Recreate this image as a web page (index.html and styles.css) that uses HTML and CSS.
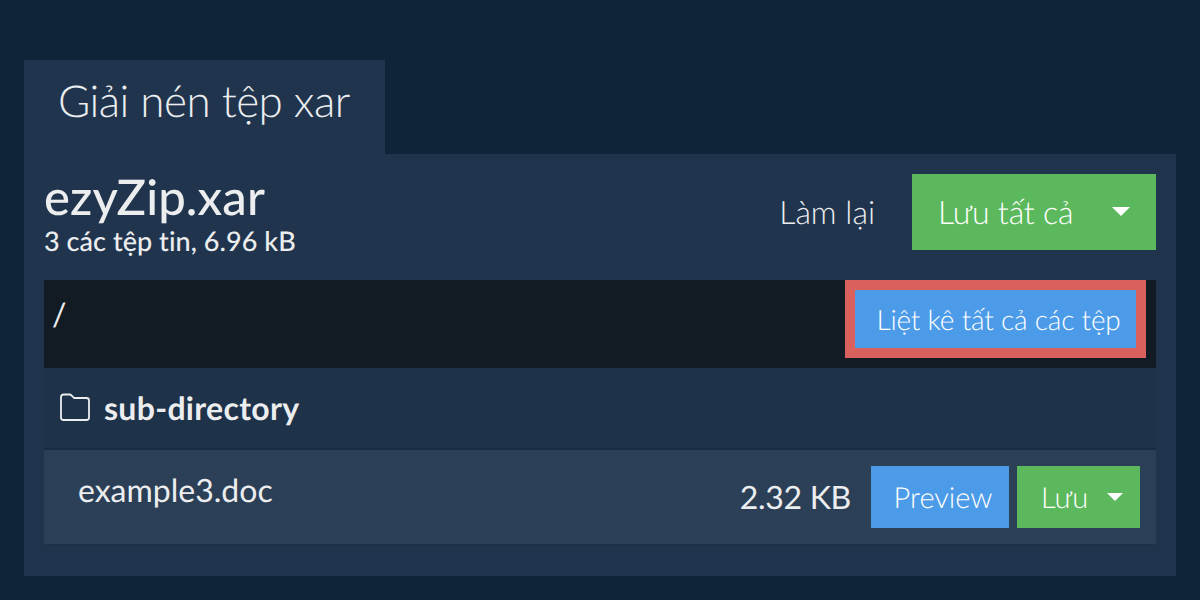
FILE: index.html
```html
<!DOCTYPE html>
<html lang="vi">
<head>
<meta charset="utf-8">
<title>Giải nén tệp xar</title>
<link rel="stylesheet" href="styles.css">
</head>
<body>
<main class="page">
  <h1 class="tab">Giải nén tệp xar</h1>
  <section class="panel">
    <header class="head">
      <div class="info">
        <div class="name">ezyZip.xar</div>
        <div class="meta">3 các tệp tin, 6.96 kB</div>
      </div>
      <div class="actions">
        <span class="redo">Làm lại</span>
        <button class="btn green save-all"><span>Lưu tất cả</span><i class="caret"></i></button>
      </div>
    </header>
    <div class="path">
      <span class="slash">/</span>
      <div class="hl"><button class="btn blue list">Liệt kê tất cả các tệp</button></div>
    </div>
    <div class="folder">
      <svg class="ficon" viewBox="0 0 32 28" width="32" height="28" fill="none" stroke="#ecedef" stroke-width="1.8" stroke-linejoin="round"><path d="M2 24.500V4a2.500 2.500 0 0 1 2.500-2.500h6a3 3 0 0 1 2 .8L15 5h12.500A2.500 2.500 0 0 1 30 7.500v17a2.500 2.500 0 0 1-2.500 2.500h-23A2.500 2.500 0 0 1 2 24.500z"/></svg>
      <span class="fname">sub-directory</span>
    </div>
    <div class="file">
      <span class="doc">example3.doc</span>
      <div class="row-actions">
        <span class="size">2.32 KB</span>
        <button class="btn blue preview">Preview</button>
        <button class="btn green save"><span>Lưu</span><i class="caret small"></i></button>
      </div>
    </div>
  </section>
</main>
</body>
</html>
```
FILE: styles.css
```css
* { box-sizing: border-box; }
html, body { margin: 0; height: 100%; }
body {
  background: #0f2439;
  color: #ecedef;
  font-family: Lato, "Liberation Sans", sans-serif;
  text-rendering: geometricPrecision;
  overflow: hidden;
}
.page { padding: 60px 24px 0; }
.tab {
  margin: 0;
  width: 361px;
  height: 94px;
  padding: 13px 0 0 34px;
  background: #20354d;
  font-size: 44px;
  line-height: 56px;
  font-weight: 300;
  letter-spacing: -0.5px;
}
.panel {
  height: 422px;
  padding: 20px;
  background: #20354d;
}
.head {
  display: flex;
  justify-content: space-between;
  height: 106px;
}
.name { font-size: 49px; line-height: 58px; font-weight: 500; margin-top: -6px; letter-spacing: 0.1px; }
.meta { font-size: 27px; line-height: 30px; font-weight: 500; letter-spacing: 0.05px; }
.actions { display: flex; align-items: flex-start; }
.redo { font-size: 32px; font-weight: 300; line-height: 76px; margin-right: 37px; }
.btn {
  display: flex;
  align-items: center;
  border: 0;
  padding: 0;
  color: #fff;
  font-family: inherit;
  font-weight: 300;
  text-rendering: geometricPrecision;
}
.green { background: #5cb85c; }
.blue { background: #4c9be8; }
.save-all {
  width: 244px;
  height: 76px;
  padding: 0 26px 2px 26px;
  justify-content: space-between;
  font-size: 32px;
  letter-spacing: -0.2px;
}
.caret {
  width: 0;
  height: 0;
  border-left: 9px solid transparent;
  border-right: 9px solid transparent;
  border-top: 9px solid #fff;
}
.caret.small { border-left-width: 8px; border-right-width: 8px; border-top-width: 8px; }
.path {
  display: flex;
  justify-content: space-between;
  height: 88px;
  padding-right: 10px;
  background: #121a24;
}
.slash { font-size: 32px; line-height: 68px; margin-left: 8px; }
.hl { height: 78px; border: 10px solid #d9605c; }
.list { width: 281px; height: 58px; justify-content: center; padding-left: 6px; font-size: 28px; letter-spacing: -0.2px; }
.folder {
  display: flex;
  align-items: center;
  height: 82px;
  padding: 0 0 0 15px;
  background: #1e3249;
  border-bottom: 2px solid #1a2c41;
}
.ficon { margin-right: 13px; margin-top: -3px; }
.fname { font-size: 32px; font-weight: 700; line-height: 80px; letter-spacing: 0.3px; }
.file {
  display: flex;
  justify-content: space-between;
  height: 96px;
  padding: 13px 16px 0 34px;
  background: #2b3f56;
  border-bottom: 2px solid #1f3146;
}
.doc { font-size: 32px; line-height: 54px; }
.row-actions { display: flex; align-items: flex-start; margin-top: 3px; }
.size { font-size: 32px; line-height: 62px; margin-right: 20px; letter-spacing: -0.3px; }
.preview { width: 138px; height: 62px; justify-content: center; padding-left: 6px; font-size: 29px; margin-right: 8px; }
.save { width: 123px; height: 62px; padding: 0 17px 0 24px; justify-content: space-between; font-size: 29px; }
```
